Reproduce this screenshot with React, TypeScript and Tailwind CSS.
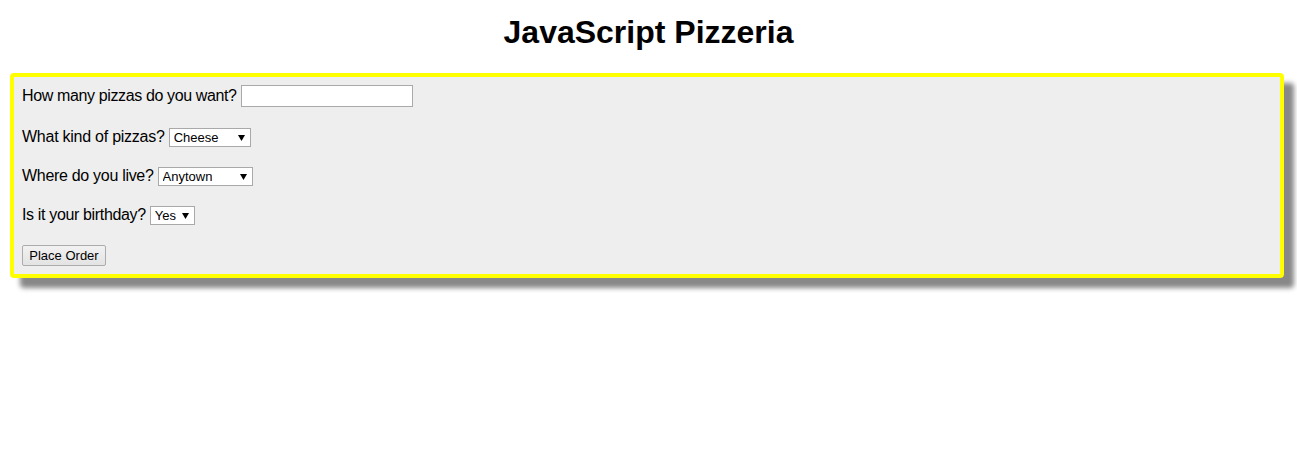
import React from "react";

function Arrow() {
  return (
    <svg
      className="pointer-events-none absolute right-[6px] top-1/2 -translate-y-1/2"
      width="7"
      height="6"
      viewBox="0 0 7 6"
    >
      <polygon points="0,0 7,0 3.5,6" fill="#000" />
    </svg>
  );
}

function FakeSelect({ width, options }: { width: number; options: string[] }) {
  return (
    <span className="relative inline-flex h-[19px]" style={{ width }}>
      <select
        className="h-[19px] w-full appearance-none rounded-none border border-[#a9a9a9] bg-white pl-[4px] pr-[16px] text-[13px] leading-[17px] text-black outline-none"
        style={{ fontFamily: '"Liberation Sans", Arial, sans-serif' }}
        defaultValue={options[0]}
      >
        {options.map((o) => (
          <option key={o} value={o}>
            {o}
          </option>
        ))}
      </select>
      <Arrow />
    </span>
  );
}

export default function App() {
  return (
    <div
      className="min-h-[460px] bg-white text-black"
      style={{ fontFamily: '"Liberation Sans", Arial, sans-serif' }}
    >
      <h1 className="mt-[14px] text-center text-[32px] font-bold leading-[37px]">
        JavaScript Pizzeria
      </h1>
      <div className="ml-[10px] mr-[13px] mt-[22px] rounded-[4px] border-4 border-[#ffff00] bg-[#eeeeee] px-[8px] pb-[8px] pt-[8px] shadow-[10px_10px_5px_#888888]">
        <div className="flex h-[22px] items-center gap-[4px] text-[16px] tracking-[-0.37px]">
          <span>How many pizzas do you want?</span>
          <input
            type="text"
            className="h-[22px] w-[172px] border border-[#a9a9a9] bg-white px-[2px] text-[13px] tracking-normal outline-none"
          />
        </div>
        <div className="mt-[19px] flex h-[22px] items-center gap-[4px] text-[16px] tracking-[-0.25px]">
          <span>What kind of pizzas?</span>
          <span className="tracking-normal">
            <FakeSelect width={82} options={["Cheese", "Pepperoni", "Veggie"]} />
          </span>
        </div>
        <div className="mt-[17px] flex h-[22px] items-center gap-[4px] text-[16px] tracking-[-0.3px]">
          <span>Where do you live?</span>
          <span className="tracking-normal">
            <FakeSelect width={95} options={["Anytown", "Springfield", "Shelbyville"]} />
          </span>
        </div>
        <div className="mt-[17px] flex h-[22px] items-center gap-[4px] text-[16px] tracking-[-0.35px]">
          <span>Is it your birthday?</span>
          <span className="tracking-normal">
            <FakeSelect width={45} options={["Yes", "No"]} />
          </span>
        </div>
        <div className="mt-[18px] flex h-[22px] items-center">
          <button
            type="button"
            className="h-[21px] w-[84px] rounded-[2px] border border-[#acacac] bg-gradient-to-b from-[#f2f2f2] to-[#e3e3e3] text-[13px] leading-[19px] text-black"
          >
            Place Order
          </button>
        </div>
      </div>
    </div>
  );
}
